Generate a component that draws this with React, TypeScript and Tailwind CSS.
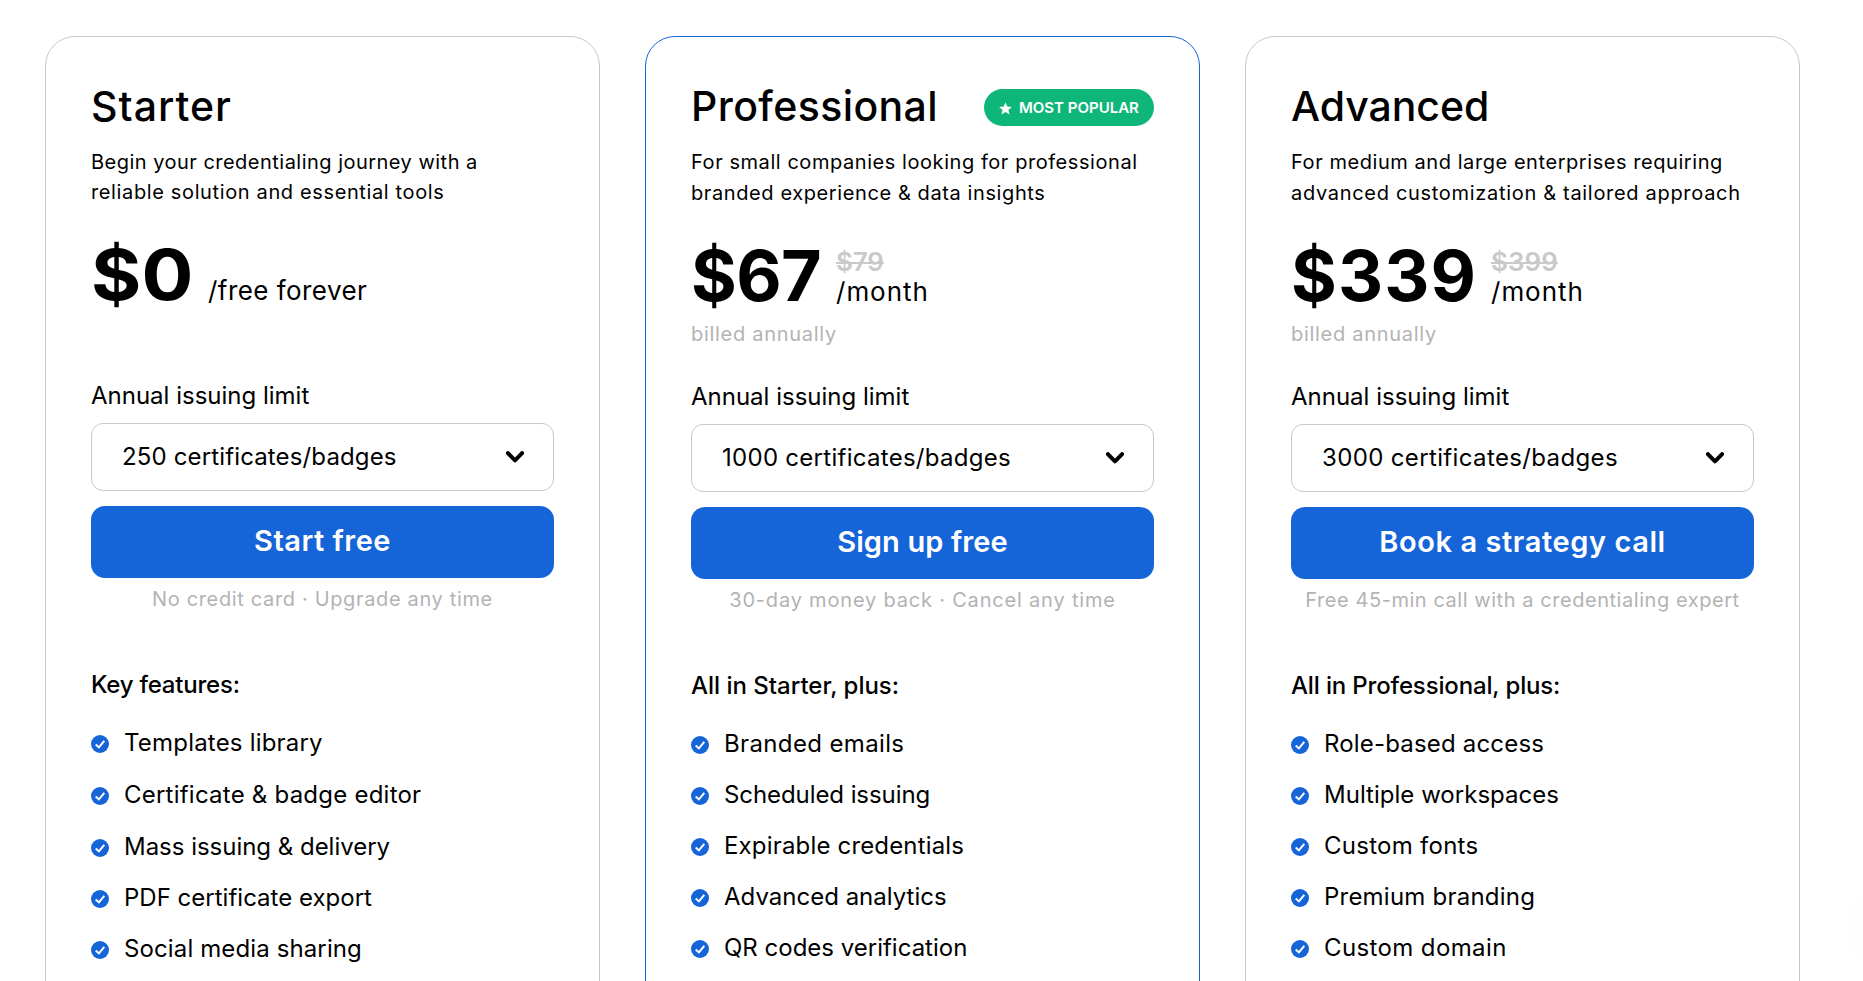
import * as React from "react";

type Label = { text: string; tracking: string };

type Plan = {
  id: string;
  name: Label;
  badge?: string;
  border: string;
  description: Label[];
  descriptionClass: string;
  price: string;
  priceClass: string;
  oldPrice?: Label;
  period: Label;
  periodClass: string;
  billing?: string;
  limit: Label;
  cta: Label;
  note: Label;
  featuresTitle: Label;
  featuresClass?: string;
  features: Label[];
};

const plans: Plan[] = [
  {
    id: "starter",
    name: { text: "Starter", tracking: "tracking-[1px]" },
    border: "border-[#c8c8c8]",
    description: [
      { text: "Begin your credentialing journey with a", tracking: "tracking-[0.48px]" },
      { text: "reliable solution and essential tools", tracking: "tracking-[0.63px]" },
    ],
    descriptionClass: "mt-[18px] leading-[30px]",
    price: "$0",
    priceClass: "origin-left scale-x-[1.1]",
    period: { text: "/free forever", tracking: "tracking-[0.44px]" },
    periodClass: "ml-[24px]",
    limit: { text: "250 certificates/badges", tracking: "tracking-[0.14px]" },
    cta: { text: "Start free", tracking: "tracking-[0.5px]" },
    note: { text: "No credit card · Upgrade any time", tracking: "tracking-[0.65px]" },
    featuresTitle: { text: "Key features:", tracking: "tracking-[-0.22px]" },
    featuresClass: "[&>li:nth-child(-n+2)]:mb-px",
    features: [
      { text: "Templates library", tracking: "tracking-[0.2px]" },
      { text: "Certificate & badge editor", tracking: "tracking-[0.23px]" },
      { text: "Mass issuing & delivery", tracking: "tracking-[-0.02px]" },
      { text: "PDF certificate export", tracking: "tracking-[0.01px]" },
      { text: "Social media sharing", tracking: "tracking-[0.12px]" },
    ],
  },
  {
    id: "professional",
    name: { text: "Professional", tracking: "tracking-[0.4px]" },
    badge: "MOST POPULAR",
    border: "border-[#1665d8]",
    description: [
      { text: "For small companies looking for professional", tracking: "tracking-[0.56px]" },
      { text: "branded experience & data insights", tracking: "tracking-[0.6px]" },
    ],
    descriptionClass: "mt-[18px] mb-[-1px] leading-[31px]",
    price: "$67",
    priceClass: "tracking-[-0.65px]",
    oldPrice: { text: "$79", tracking: "tracking-[-0.2px]" },
    period: { text: "/month", tracking: "tracking-[0.95px]" },
    periodClass: "ml-[15px]",
    billing: "billed annually",
    limit: { text: "1000 certificates/badges", tracking: "tracking-[0.28px]" },
    cta: { text: "Sign up free", tracking: "tracking-[0.12px]" },
    note: { text: "30-day money back · Cancel any time", tracking: "tracking-[0.81px]" },
    featuresTitle: { text: "All in Starter, plus:", tracking: "tracking-[-0.01px]" },
    features: [
      { text: "Branded emails", tracking: "tracking-[0.36px]" },
      { text: "Scheduled issuing", tracking: "tracking-[-0.08px]" },
      { text: "Expirable credentials", tracking: "tracking-[0.17px]" },
      { text: "Advanced analytics", tracking: "tracking-[0.01px]" },
      { text: "QR codes verification", tracking: "tracking-[0px]" },
    ],
  },
  {
    id: "advanced",
    name: { text: "Advanced", tracking: "tracking-[-0.06px]" },
    border: "border-[#c8c8c8]",
    description: [
      { text: "For medium and large enterprises requiring", tracking: "tracking-[0.56px]" },
      { text: "advanced customization & tailored approach", tracking: "tracking-[0.69px]" },
    ],
    descriptionClass: "mt-[18px] mb-[-1px] leading-[31px]",
    price: "$339",
    priceClass: "tracking-[1.1px]",
    oldPrice: { text: "$399", tracking: "tracking-[0px]" },
    period: { text: "/month", tracking: "tracking-[0.95px]" },
    periodClass: "ml-[14px]",
    billing: "billed annually",
    limit: { text: "3000 certificates/badges", tracking: "tracking-[0.36px]" },
    cta: { text: "Book a strategy call", tracking: "tracking-[0.58px]" },
    note: { text: "Free 45-min call with a credentialing expert", tracking: "tracking-[0.55px]" },
    featuresTitle: { text: "All in Professional, plus:", tracking: "tracking-[-0.15px]" },
    features: [
      { text: "Role-based access", tracking: "tracking-[0.18px]" },
      { text: "Multiple workspaces", tracking: "tracking-[0.02px]" },
      { text: "Custom fonts", tracking: "tracking-[0.27px]" },
      { text: "Premium branding", tracking: "tracking-[0.22px]" },
      { text: "Custom domain", tracking: "tracking-[0.38px]" },
    ],
  },
];

function CheckIcon(): React.JSX.Element {
  return (
    <svg className="mt-0.5 h-[18px] w-[18px] shrink-0" viewBox="0 0 18 18" aria-hidden="true">
      <circle cx="9" cy="9" r="9" fill="#1665d8" />
      <path d="M4.7 9.4 L7.9 12.4 L13.3 5.8" fill="none" stroke="#fff" strokeWidth="2" />
    </svg>
  );
}

function ChevronIcon(): React.JSX.Element {
  return (
    <svg className="h-3 w-[18px]" viewBox="0 0 18 12" aria-hidden="true">
      <path
        d="M1.9 2.1 L9 9.4 L16.1 2.1"
        fill="none"
        stroke="#000"
        strokeWidth="4"
        strokeLinecap="round"
        strokeLinejoin="round"
      />
    </svg>
  );
}

function PopularBadge({ label }: { label: string }): React.JSX.Element {
  return (
    <span className="mt-[7px] flex h-[37px] w-[170px] shrink-0 items-center rounded-full bg-[#0fb67a] pl-[15px] text-white">
      <svg className="mt-[2px] h-[13px] w-[13px] shrink-0" viewBox="0 0 13 12" aria-hidden="true">
        <path
          d="M6.5 0 L8.3 4.1 L12.8 4.5 L9.4 7.4 L10.5 12 L6.5 9.6 L2.5 12 L3.6 7.4 L0.2 4.5 L4.7 4.1 Z"
          fill="#fff"
        />
      </svg>
      <span className="ml-[7px] text-[15px] leading-[35px] font-semibold whitespace-nowrap">{label}</span>
    </span>
  );
}

function PlanCard({ plan }: { plan: Plan }): React.JSX.Element {
  return (
    <section
      className={`flex h-[1100px] w-[555px] shrink-0 flex-col rounded-[30px] border bg-white px-[45px] pt-[45px] ${plan.border}`}
    >
      <div className="flex h-[47px] items-start justify-between">
        <h2 className={`text-[41px] leading-[48px] font-medium ${plan.name.tracking}`}>{plan.name.text}</h2>
        {plan.badge && <PopularBadge label={plan.badge} />}
      </div>

      <div className={`text-xl whitespace-nowrap ${plan.descriptionClass}`}>
        {plan.description.map((line) => (
          <p key={line.text} className={`${line.tracking} leading-[inherit]`}>
            {line.text}
          </p>
        ))}
      </div>

      <div className="mt-[33px] flex h-[70px] items-end">
        <span className={`text-[70px] leading-[70px] font-bold ${plan.priceClass}`}>{plan.price}</span>
        <div className={`pb-1 text-[26px] leading-[30px] ${plan.periodClass}`}>
          {plan.oldPrice && (
            <p>
              <s className={`font-semibold text-[#c9c9c9] decoration-2 ${plan.oldPrice.tracking}`}>
                {plan.oldPrice.text}
              </s>
            </p>
          )}
          <p className={plan.period.tracking}>{plan.period.text}</p>
        </div>
      </div>
      <p className="mt-[11px] h-6 text-xl leading-6 tracking-[0.71px] text-[#b3b3b3]">{plan.billing}</p>

      <p className="mt-9 text-2xl leading-[30px]">Annual issuing limit</p>
      <button
        type="button"
        className="mt-3 flex h-[68px] w-full shrink-0 items-center justify-between rounded-xl border border-[#c8c8c8] pr-[29px] pl-[30px]"
      >
        <span className={`text-2xl leading-[30px] ${plan.limit.tracking}`}>{plan.limit.text}</span>
        <ChevronIcon />
      </button>
      <button
        type="button"
        className={`mt-[15px] h-[72px] w-full shrink-0 rounded-[14px] bg-[#1665d8] pb-0.5 text-[29px] leading-[70px] font-semibold text-white ${plan.cta.tracking}`}
      >
        {plan.cta.text}
      </button>
      <p className={`mt-[9px] text-center text-xl leading-6 whitespace-nowrap text-[#b3b3b3] ${plan.note.tracking}`}>
        {plan.note.text}
      </p>

      <h3 className={`mt-[59px] text-2xl leading-[30px] font-medium ${plan.featuresTitle.tracking}`}>
        {plan.featuresTitle.text}
      </h3>
      <ul className={`mt-7 flex flex-col gap-[21px] ${plan.featuresClass ?? ""}`}>
        {plan.features.map((feature) => (
          <li key={feature.text} className="flex h-[30px] items-center gap-[15px]">
            <CheckIcon />
            <span className={`text-2xl leading-[30px] ${feature.tracking}`}>{feature.text}</span>
          </li>
        ))}
      </ul>
    </section>
  );
}

export default function App(): React.JSX.Element {
  return (
    <main className="relative h-[981px] overflow-hidden bg-white font-['Inter',sans-serif] text-black">
      <div className="flex gap-[45px] pt-9 pl-[45px]">
        {plans.map((plan) => (
          <PlanCard key={plan.id} plan={plan} />
        ))}
      </div>
      {/* soft shadow of the launcher that sits past the right edge */}
      <div className="absolute top-[894px] -right-[76px] h-[70px] w-[70px] rounded-full shadow-[0_0_40px_rgba(0,0,0,0.035)]" />
    </main>
  );
}
